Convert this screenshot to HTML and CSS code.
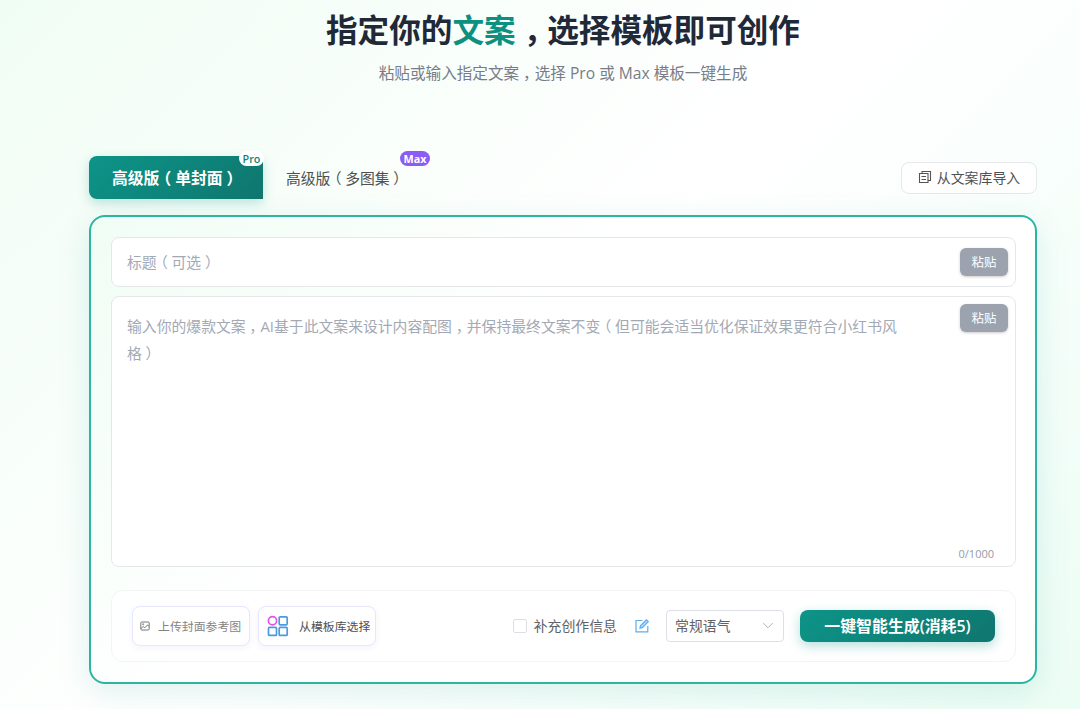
FILE: index.html
```html
<!DOCTYPE html>
<html lang="zh-CN">
<head>
    <meta charset="UTF-8">
    <meta name="viewport" content="width=device-width, initial-scale=1.0">
    <title>指定文案创作</title>
    <link rel="stylesheet" href="styles.css">
</head>
<body>

    <header class="hero">
        <h1>指定你的<span class="highlight">文案</span><span class="punct">，</span>选择模板即可创作</h1>
        <p>粘贴或输入指定文案<span class="punct">，</span>选择 Pro 或 Max 模板一键生成</p>
    </header>

    <main class="container">
        <div class="tab-bar">
            <div class="tabs">
                <button class="tab active">高级版<span class="punct">（</span>单封面<span class="punct">）</span><span class="badge badge-pro">Pro</span></button>
                <button class="tab">高级版<span class="punct">（</span>多图集<span class="punct">）</span><span class="badge badge-max">Max</span></button>
            </div>
            <button class="import-btn">
                <svg width="14" height="14" viewBox="0 0 14 14" fill="none" stroke="#555" stroke-width="1.1">
                    <path d="M4 3V1.500h8.500v9H10"/>
                    <path d="M1.500 3.500H10v9H1.500z"/>
                    <path d="M3.500 6.500H8M3.500 9.500H8"/>
                </svg>
                从文案库导入
            </button>
        </div>

        <section class="panel">
            <div class="field title-field">
                <div class="placeholder">标题<span class="punct">（</span>可选<span class="punct">）</span></div>
                <button class="paste-btn">粘贴</button>
            </div>

            <div class="field content-field">
                <div class="placeholder">输入你的爆款文案<span class="punct">，</span>AI基于此文案来设计内容配图<span class="punct">，</span>并保持最终文案不变<span class="punct">（</span>但可能会适当优化保证效果更符合小红书风格<span class="punct">）</span></div>
                <button class="paste-btn">粘贴</button>
                <span class="counter">0/1000</span>
            </div>

            <div class="toolbar">
                <div class="toolbar-left">
                    <button class="tool-btn upload">
                        <svg width="10" height="10" viewBox="0 0 10 10" fill="none" stroke="#777" stroke-width="1">
                            <rect x="0.800" y="1" width="8.400" height="8" rx="1"/>
                            <path d="M1 7.500L3.200 5.500l1.600 1.300L7.500 4 9 5.200"/>
                            <circle cx="3.200" cy="3.200" r="0.500"/>
                        </svg>
                        上传封面参考图
                    </button>
                    <button class="tool-btn template">
                        <svg width="22" height="22" viewBox="0 0 22 22" fill="none" stroke="#4a9be0" stroke-width="1.700">
                            <circle cx="5.500" cy="5.800" r="4.100" stroke="#e254e0"/>
                            <rect x="12.200" y="1.800" width="8" height="8" rx="1"/>
                            <rect x="1.500" y="12.400" width="8" height="8" rx="1"/>
                            <rect x="12.200" y="12.400" width="8" height="8" rx="1"/>
                        </svg>
                        从模板库选择
                    </button>
                </div>
                <div class="toolbar-right">
                    <label class="extra"><span class="checkbox"></span><span class="extra-text">补充创作信息</span></label>
                    <svg class="edit-icon" width="14" height="14" viewBox="0 0 14 14" fill="none" stroke="#5aaef2" stroke-width="1.200">
                        <path d="M7.500 1.500H1v11.300h11.800V7"/>
                        <path d="M5 9.200l.4-2.400 6-6 1.900 1.900-6 6z" fill="#b5dafa"/>
                    </svg>
                    <div class="select">
                        常规语气
                        <svg width="12" height="12" viewBox="0 0 12 12" fill="none" stroke="#b0b3b8" stroke-width="1">
                            <path d="M1.200 4L6 8.800l4.800-4.800"/>
                        </svg>
                    </div>
                    <button class="generate-btn">一键智能生成(消耗5)</button>
                </div>
            </div>
        </section>
    </main>

</body>
</html>
```

FILE: styles.css
```css
* {
    margin: 0;
    padding: 0;
    box-sizing: border-box;
}

body {
    font-family: "Open Sans", "Noto Sans CJK SC", sans-serif;
    height: 709px;
    overflow: hidden;
    background: linear-gradient(135deg, #f0fdf4 0%, #ffffff 50%, #ecfdf5 100%);
    color: #606266;
}

button {
    font-family: inherit;
    border: none;
    background: none;
    white-space: nowrap;
}

/* 全角标点居中 */
.punct {
    display: inline-block;
    width: 1em;
    text-align: center;
    font-feature-settings: "halt";
}

.hero {
    text-align: center;
    padding-left: 46px;
}

.hero h1 {
    height: 60px;
    line-height: 60px;
    font-size: 31.6px;
    font-weight: 700;
    color: #1f2937;
}

.hero .highlight {
    color: #0d9080;
}

.hero p {
    height: 28px;
    line-height: 26px;
    font-size: 15.6px;
    color: #777d88;
}

.container {
    width: 948px;
    margin: 68px 0 0 89px;
}

.tab-bar {
    display: flex;
    justify-content: space-between;
    height: 44px;
}

.tabs {
    display: flex;
}

.tab {
    position: relative;
    width: 174px;
    height: 43px;
    padding-left: 23px;
    text-align: left;
    font-size: 14.8px;
    color: #505050;
}

.tab.active {
    font-size: 15.8px;
    font-weight: 700;
    color: #fff;
    background: linear-gradient(135deg, #0d9488, #0f766e);
    border-radius: 8px 0 0 8px;
    box-shadow: 0 4px 12px rgba(13, 148, 136, 0.25);
}

.badge {
    position: absolute;
    top: -5px;
    height: 15px;
    line-height: 15px;
    border-radius: 8px;
    font-size: 10.8px;
    font-weight: 600;
    text-align: center;
}

.badge-pro {
    right: -1px;
    width: 25px;
    background: #fff;
    color: #0d8478;
}

.badge-max {
    left: 137px;
    width: 30px;
    background: #8b5cf6;
    font-weight: 700;
    color: #fff;
}

.import-btn {
    display: flex;
    align-items: center;
    justify-content: center;
    gap: 5px;
    width: 136px;
    height: 32px;
    margin-top: 6px;
    padding-bottom: 2px;
    background: #fff;
    border: 1px solid #e5e7eb;
    border-radius: 8px;
    font-size: 13.9px;
    color: #505050;
}

.panel {
    height: 469px;
    margin-top: 15px;
    padding: 20px 19px 20px 20px;
    border: 2px solid #2bb5a2;
    border-radius: 16px;
    background: linear-gradient(135deg, #f0fdf4 0%, #ffffff 40%);
    box-shadow: 0 8px 32px rgba(13, 148, 136, 0.13);
}

.field {
    position: relative;
    padding-left: 15px;
    background: #fff;
    border: 1px solid #e5e7eb;
    border-radius: 8px;
    font-size: 14.83px;
    color: #a3a9b4;
}

.title-field {
    height: 50px;
    line-height: 48px;
}

.content-field {
    height: 271px;
    margin-top: 9px;
    padding-top: 16px;
    line-height: 26.6px;
}

.content-field .placeholder {
    width: 780px;
}

.paste-btn {
    position: absolute;
    top: 10px;
    right: 7px;
    width: 48px;
    height: 28px;
    padding-bottom: 1px;
    background: #9ca3af;
    border-radius: 6px;
    box-shadow: 0 1px 3px rgba(0, 0, 0, 0.2);
    font-size: 12.4px;
    color: #fff;
}

.content-field .paste-btn {
    top: 7px;
}

.counter {
    position: absolute;
    right: 21px;
    bottom: 3px;
    line-height: 18px;
    font-size: 11px;
    color: #959ba6;
}

.toolbar {
    display: flex;
    align-items: center;
    justify-content: space-between;
    height: 72px;
    margin-top: 23px;
    padding: 0 20px;
    background: rgba(255, 255, 255, 0.8);
    border: 1px solid #f3f4f6;
    border-radius: 12px;
}

.toolbar-left,
.toolbar-right {
    display: flex;
    align-items: center;
}

.toolbar-left {
    gap: 8px;
}

.tool-btn {
    display: flex;
    align-items: center;
    width: 118px;
    height: 40px;
    padding: 0 0 1px 8px;
    gap: 8px;
    background: #fff;
    border: 1px solid #e8e6fa;
    border-radius: 8px;
    box-shadow: 0 2px 6px rgba(99, 102, 241, 0.08);
    font-size: 11.9px;
}

.upload {
    padding-left: 7px;
    color: #858585;
}

.template {
    gap: 10px;
    color: #505050;
}

.extra {
    display: flex;
    align-items: center;
    gap: 7px;
    font-size: 13.9px;
}

.extra-text {
    padding-bottom: 2px;
}

.checkbox {
    width: 14px;
    height: 14px;
    background: #fff;
    border: 1px solid #dcdfe6;
    border-radius: 2px;
}

.edit-icon {
    margin: 0 17px 0 18px;
}

.select {
    display: flex;
    align-items: center;
    justify-content: space-between;
    width: 118px;
    height: 32px;
    padding: 0 9px 2px 8px;
    background: #fff;
    border: 1px solid #dcdfe6;
    border-radius: 4px;
    font-size: 13.9px;
}

.generate-btn {
    width: 195px;
    height: 32px;
    margin-left: 16px;
    padding-bottom: 2px;
    background: linear-gradient(135deg, #0d9488, #0f766e);
    border-radius: 8px;
    box-shadow: 0 4px 12px rgba(13, 148, 136, 0.3);
    font-size: 15.9px;
    font-weight: 600;
    color: #fff;
}
```
